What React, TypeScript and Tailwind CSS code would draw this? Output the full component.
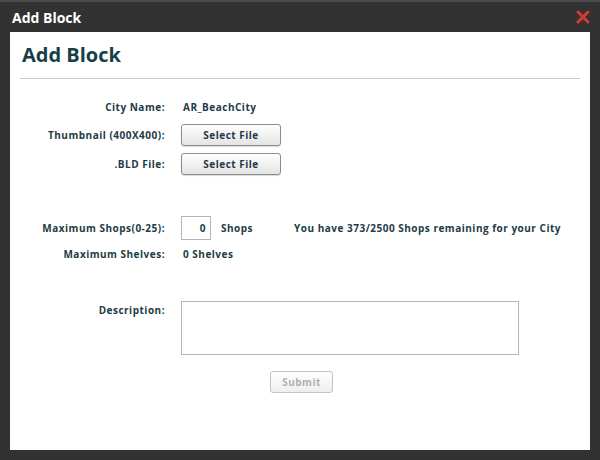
import React from "react";

const LABEL = "w-[161px] shrink-0 text-right pr-[16px]";

function Row({ label, children, className = "" }: { label: string; children?: React.ReactNode; className?: string }) {
  return (
    <div className={`flex items-center ${className}`}>
      <div className={LABEL}>{label}</div>
      <div className="flex items-center">{children}</div>
    </div>
  );
}

function FileButton() {
  return (
    <button className="w-[100px] h-[22px] rounded-[3px] border border-[#8c8c8c] bg-gradient-to-b from-white to-[#e4e4e4] text-[#1d3b45] shadow-[0_1px_1px_rgba(0,0,0,0.15)]">
      Select File
    </button>
  );
}

export default function App() {
  return (
    <div className="w-[600px] h-[460px] bg-[#323232] flex flex-col font-['Open_Sans',sans-serif] border-t-[2px] border-[#4a4a4a]">
      <div className="h-[30px] flex items-center justify-between pl-[12px] pr-[10px]">
        <span className="text-white font-bold text-[14px]">Add Block</span>
        <svg width="14" height="14" viewBox="0 0 14 14">
          <path d="M2 2 L12 12 M12 2 L2 12" stroke="#d23a33" strokeWidth="3" strokeLinecap="round" />
        </svg>
      </div>
      <div className="mx-[10px] h-[418px] bg-white px-[10px] pt-[10px]">
        <h1 className="text-[#183e48] font-bold text-[20px] pl-[2px] h-[26px] leading-[26px]">Add Block</h1>
        <div className="mt-[10px] h-[1px] bg-[#c5cfd1]" />
        <div className="text-[10px] font-bold text-[#1d3b45] tracking-[0.5px]">
          <Row label="City Name:" className="mt-[21px] h-[14px]">
            <span className="pl-[2px]">AR_BeachCity</span>
          </Row>
          <Row label="Thumbnail (400X400):" className="mt-[10px] h-[22px]">
            <FileButton />
          </Row>
          <Row label=".BLD File:" className="mt-[7px] h-[22px]">
            <FileButton />
          </Row>
          <Row label="Maximum Shops(0-25):" className="mt-[41px] h-[24px]">
            <div className="w-[30px] h-[24px] border border-[#b5b5b5] flex items-center justify-end pr-[4px]">0</div>
            <span className="ml-[10px]">Shops</span>
            <span className="ml-[41px]">You have 373/2500 Shops remaining for your City</span>
          </Row>
          <Row label="Maximum Shelves:" className="mt-[7px] h-[14px]">
            <span className="pl-[2px]">0 Shelves</span>
          </Row>
          <div className="flex mt-[40px]">
            <div className={`${LABEL} pt-[2px]`}>Description:</div>
            <div className="w-[338px] h-[54px] border border-[#b5b5b5]" />
          </div>
          <div className="flex justify-center pl-[3px] mt-[16px]">
            <button className="w-[63px] h-[22px] rounded-[3px] border border-[#c4c4c4] bg-gradient-to-b from-white to-[#eeeeee] text-[#b0b0b0]">
              Submit
            </button>
          </div>
        </div>
      </div>
    </div>
  );
}
